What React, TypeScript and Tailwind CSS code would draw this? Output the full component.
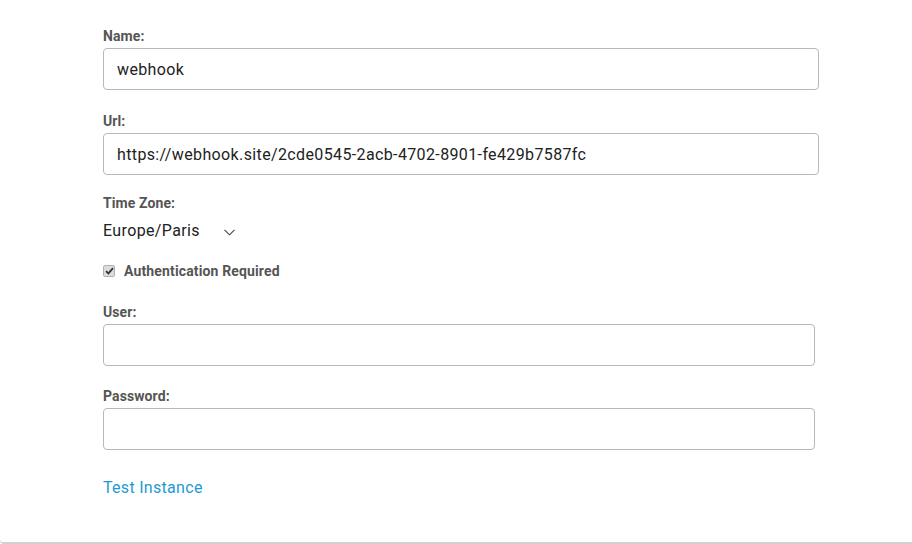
export default function App() {
  return (
    <div className="w-[912px] h-[544px] bg-white overflow-hidden" style={{ fontFamily: 'Roboto, "Liberation Sans", sans-serif' }}>
      <div className="h-[544px] border-b-2 border-[#d0d0d0] rounded-bl-[4px] pl-[103px] pt-[26px]">
        <Label>Name:</Label>
        <input
          readOnly
          value="webhook"
          className="mt-[2px] block w-[716px] h-[42px] border border-[#b8b8b8] rounded-[4px] px-[13px] text-[16px] tracking-[0.37px] text-[#222] outline-none"
        />

        <div className="mt-[21px]">
          <Label>Url:</Label>
        </div>
        <input
          readOnly
          value="https://webhook.site/2cde0545-2acb-4702-8901-fe429b7587fc"
          className="mt-[2px] block w-[716px] h-[42px] border border-[#b8b8b8] rounded-[4px] px-[13px] text-[16px] tracking-[0.37px] text-[#222] outline-none"
        />

        <div className="mt-[18px]">
          <Label>Time Zone:</Label>
        </div>
        <div className="mt-[6px] h-[24px] flex items-center text-[16px] tracking-[0.37px] text-[#222]">
          <span>Europe/Paris</span>
          <svg className="ml-[24px] mt-[2px]" width="11" height="7" viewBox="0 0 11 7" fill="none">
            <path d="M0.5 0.8 L5.5 5.8 L10.5 0.8" stroke="#444" strokeWidth="1.1" />
          </svg>
        </div>

        <div className="mt-[18px] h-[20px] flex items-center">
          <span className="w-[12px] h-[12px] rounded-[2px] bg-[#dcdcdc] border border-[#b0b0b0] flex items-center justify-center">
            <svg width="9" height="8" viewBox="0 0 9 8" fill="none">
              <path d="M1 4.2 L3.4 6.4 L8 1.2" stroke="#333" strokeWidth="1.8" />
            </svg>
          </span>
          <span className="ml-[9px] text-[14px] font-bold tracking-[0.14px] text-[#555]">Authentication Required</span>
        </div>

        <div className="mt-[21px]">
          <Label>User:</Label>
        </div>
        <input
          readOnly
          className="mt-[2px] block w-[712px] h-[42px] border border-[#b8b8b8] rounded-[4px] px-[13px] text-[16px] text-[#222] outline-none"
        />

        <div className="mt-[20px]">
          <Label>Password:</Label>
        </div>
        <input
          readOnly
          type="password"
          className="mt-[2px] block w-[712px] h-[42px] border border-[#b8b8b8] rounded-[4px] px-[13px] text-[16px] text-[#222] outline-none"
        />

        <a className="mt-[26px] block text-[16px] leading-[24px] tracking-[0.3px] text-[#1e9ad0] w-fit cursor-pointer">Test Instance</a>
      </div>
    </div>
  )
}

function Label({ children }: { children: React.ReactNode }) {
  return <div className="h-[20px] leading-[20px] text-[14px] font-bold tracking-[0.1px] text-[#555]">{children}</div>
}
